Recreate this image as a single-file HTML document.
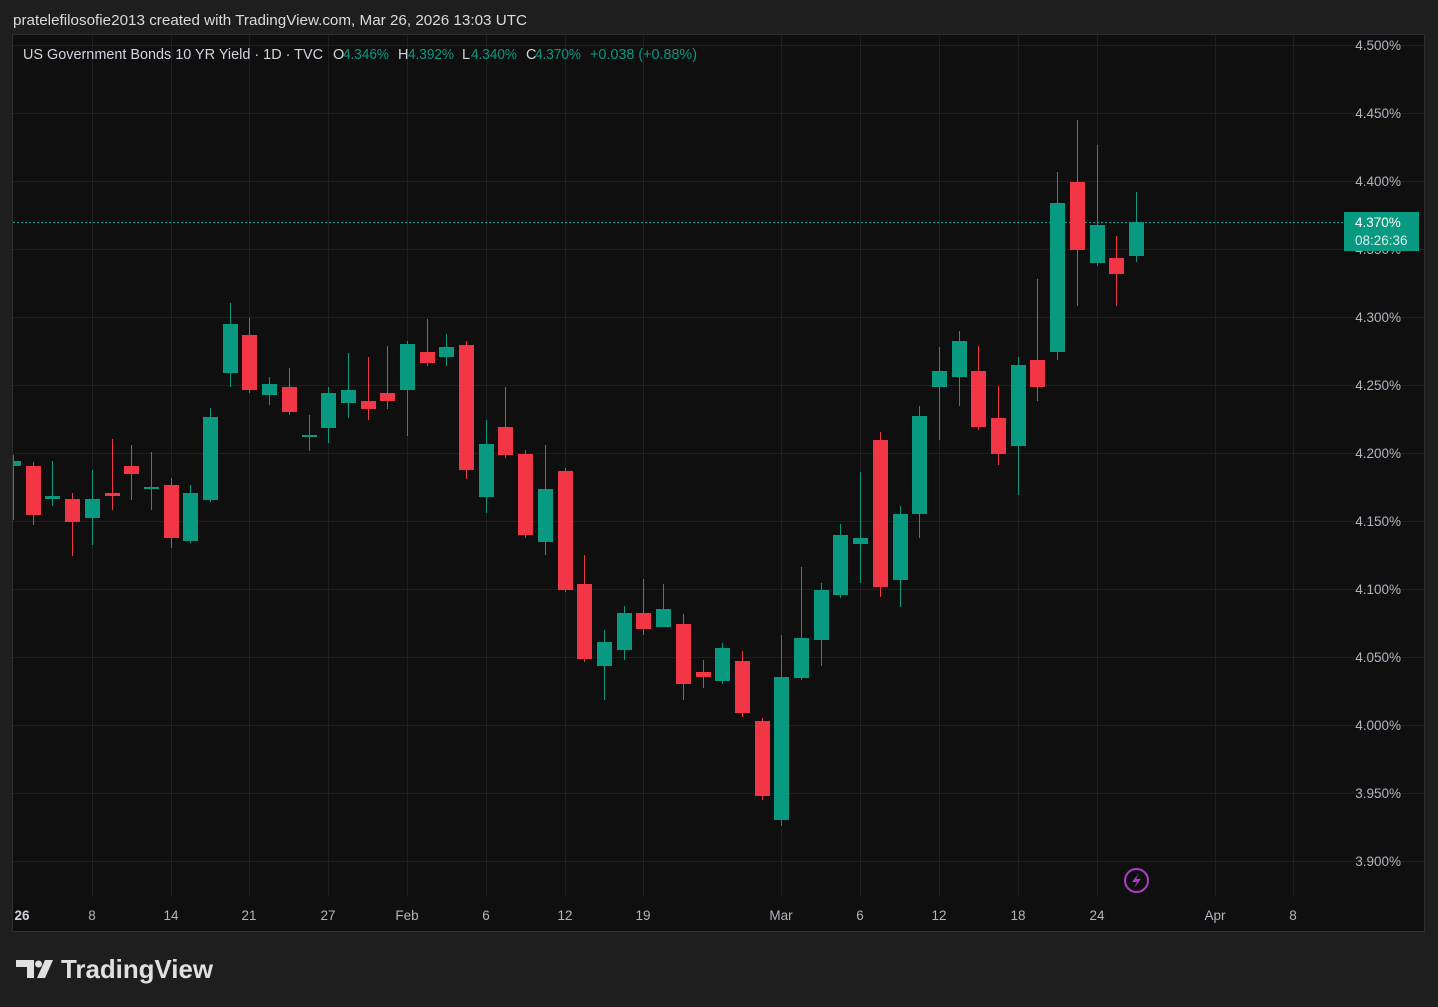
<!DOCTYPE html>
<html><head><meta charset="utf-8"><style>
html,body{margin:0;padding:0;background:#1e1e1e;width:1438px;height:1007px;overflow:hidden}
svg{display:block}
text{font-family:"Liberation Sans",sans-serif}
</style></head><body>
<svg width="1438" height="1007" viewBox="0 0 1438 1007">
<rect width="1438" height="1007" fill="#1e1e1e"/>
<text x="13" y="25" font-size="14.5" fill="#dbdbdb" textLength="514" lengthAdjust="spacingAndGlyphs">pratelefilosofie2013 created with TradingView.com, Mar 26, 2026 13:03 UTC</text>
<rect x="12.5" y="34.5" width="1412" height="897" fill="#0f0f0f" stroke="#2e2e2e"/>
<g stroke="#1f1f1f" stroke-width="1">
<line x1="13" x2="1424" y1="45.5" y2="45.5"/><line x1="13" x2="1424" y1="113.5" y2="113.5"/><line x1="13" x2="1424" y1="181.5" y2="181.5"/><line x1="13" x2="1424" y1="249.5" y2="249.5"/><line x1="13" x2="1424" y1="317.5" y2="317.5"/><line x1="13" x2="1424" y1="385.5" y2="385.5"/><line x1="13" x2="1424" y1="453.5" y2="453.5"/><line x1="13" x2="1424" y1="521.5" y2="521.5"/><line x1="13" x2="1424" y1="589.5" y2="589.5"/><line x1="13" x2="1424" y1="657.5" y2="657.5"/><line x1="13" x2="1424" y1="725.5" y2="725.5"/><line x1="13" x2="1424" y1="793.5" y2="793.5"/><line x1="13" x2="1424" y1="861.5" y2="861.5"/>
<line x1="92.5" x2="92.5" y1="35" y2="896"/><line x1="171.5" x2="171.5" y1="35" y2="896"/><line x1="249.5" x2="249.5" y1="35" y2="896"/><line x1="328.5" x2="328.5" y1="35" y2="896"/><line x1="407.5" x2="407.5" y1="35" y2="896"/><line x1="486.5" x2="486.5" y1="35" y2="896"/><line x1="565.5" x2="565.5" y1="35" y2="896"/><line x1="643.5" x2="643.5" y1="35" y2="896"/><line x1="781.5" x2="781.5" y1="35" y2="896"/><line x1="860.5" x2="860.5" y1="35" y2="896"/><line x1="939.5" x2="939.5" y1="35" y2="896"/><line x1="1018.5" x2="1018.5" y1="35" y2="896"/><line x1="1097.5" x2="1097.5" y1="35" y2="896"/><line x1="1215.5" x2="1215.5" y1="35" y2="896"/><line x1="1293.5" x2="1293.5" y1="35" y2="896"/>
</g>
<line x1="13" x2="1345" y1="222.5" y2="222.5" stroke="#089981" stroke-width="1.2" stroke-dasharray="2 2"/>
<g>
<g fill="#089981">
<rect x="13" y="461" width="8" height="5"/><rect x="13" y="455" width="1" height="65"/>
<rect x="45" y="496" width="15" height="3"/><rect x="52" y="461" width="1" height="45"/>
<rect x="85" y="499" width="15" height="19"/><rect x="92" y="470" width="1" height="75"/>
<rect x="144" y="487" width="15" height="2"/><rect x="151" y="452" width="1" height="58"/>
<rect x="183" y="493" width="15" height="48"/><rect x="190" y="485" width="1" height="58"/>
<rect x="203" y="417" width="15" height="83"/><rect x="210" y="408" width="1" height="94"/>
<rect x="223" y="324" width="15" height="49"/><rect x="230" y="303" width="1" height="84"/>
<rect x="262" y="384" width="15" height="11"/><rect x="269" y="377" width="1" height="28"/>
<rect x="302" y="435" width="15" height="2"/><rect x="309" y="415" width="1" height="36"/>
<rect x="321" y="393" width="15" height="35"/><rect x="328" y="387" width="1" height="56"/>
<rect x="341" y="390" width="15" height="13"/><rect x="348" y="353" width="1" height="65"/>
<rect x="400" y="344" width="15" height="46"/><rect x="407" y="341" width="1" height="95"/>
<rect x="439" y="347" width="15" height="10"/><rect x="446" y="334" width="1" height="32"/>
<rect x="479" y="444" width="15" height="53"/><rect x="486" y="420" width="1" height="93"/>
<rect x="538" y="489" width="15" height="53"/><rect x="545" y="445" width="1" height="110"/>
<rect x="597" y="642" width="15" height="24"/><rect x="604" y="630" width="1" height="70"/>
<rect x="617" y="613" width="15" height="37"/><rect x="624" y="606" width="1" height="54"/>
<rect x="656" y="609" width="15" height="18"/><rect x="663" y="584" width="1" height="43"/>
<rect x="715" y="648" width="15" height="33"/><rect x="722" y="643" width="1" height="41"/>
<rect x="774" y="677" width="15" height="143"/><rect x="781" y="635" width="1" height="191"/>
<rect x="794" y="638" width="15" height="40"/><rect x="801" y="567" width="1" height="113"/>
<rect x="814" y="590" width="15" height="50"/><rect x="821" y="583" width="1" height="83"/>
<rect x="833" y="535" width="15" height="60"/><rect x="840" y="524" width="1" height="74"/>
<rect x="853" y="538" width="15" height="6"/><rect x="860" y="472" width="1" height="111"/>
<rect x="893" y="514" width="15" height="66"/><rect x="900" y="506" width="1" height="101"/>
<rect x="912" y="416" width="15" height="98"/><rect x="919" y="406" width="1" height="132"/>
<rect x="932" y="371" width="15" height="16"/><rect x="939" y="347" width="1" height="93"/>
<rect x="952" y="341" width="15" height="36"/><rect x="959" y="331" width="1" height="75"/>
<rect x="1011" y="365" width="15" height="81"/><rect x="1018" y="357" width="1" height="138"/>
<rect x="1050" y="203" width="15" height="149"/><rect x="1057" y="172" width="1" height="188"/>
<rect x="1090" y="225" width="15" height="38"/><rect x="1097" y="145" width="1" height="121"/>
<rect x="1129" y="222" width="15" height="34"/><rect x="1136" y="192" width="1" height="70"/>
</g>
<g fill="#f23645">
<rect x="26" y="466" width="15" height="49"/><rect x="33" y="462" width="1" height="63"/>
<rect x="65" y="499" width="15" height="23"/><rect x="72" y="493" width="1" height="63"/>
<rect x="105" y="493" width="15" height="3"/><rect x="112" y="439" width="1" height="71"/>
<rect x="124" y="466" width="15" height="8"/><rect x="131" y="445" width="1" height="55"/>
<rect x="164" y="485" width="15" height="53"/><rect x="171" y="478" width="1" height="70"/>
<rect x="242" y="335" width="15" height="55"/><rect x="249" y="318" width="1" height="75"/>
<rect x="282" y="387" width="15" height="25"/><rect x="289" y="368" width="1" height="47"/>
<rect x="361" y="401" width="15" height="8"/><rect x="368" y="357" width="1" height="63"/>
<rect x="380" y="393" width="15" height="8"/><rect x="387" y="346" width="1" height="63"/>
<rect x="420" y="352" width="15" height="11"/><rect x="427" y="319" width="1" height="47"/>
<rect x="459" y="345" width="15" height="125"/><rect x="466" y="341" width="1" height="138"/>
<rect x="498" y="427" width="15" height="28"/><rect x="505" y="387" width="1" height="71"/>
<rect x="518" y="454" width="15" height="81"/><rect x="525" y="450" width="1" height="88"/>
<rect x="558" y="471" width="15" height="119"/><rect x="565" y="468" width="1" height="124"/>
<rect x="577" y="584" width="15" height="75"/><rect x="584" y="555" width="1" height="107"/>
<rect x="636" y="613" width="15" height="16"/><rect x="643" y="579" width="1" height="56"/>
<rect x="676" y="624" width="15" height="60"/><rect x="683" y="614" width="1" height="86"/>
<rect x="696" y="672" width="15" height="5"/><rect x="703" y="660" width="1" height="28"/>
<rect x="735" y="661" width="15" height="52"/><rect x="742" y="651" width="1" height="66"/>
<rect x="755" y="721" width="15" height="75"/><rect x="762" y="718" width="1" height="82"/>
<rect x="873" y="440" width="15" height="147"/><rect x="880" y="432" width="1" height="165"/>
<rect x="971" y="371" width="15" height="56"/><rect x="978" y="346" width="1" height="84"/>
<rect x="991" y="418" width="15" height="36"/><rect x="998" y="386" width="1" height="79"/>
<rect x="1030" y="360" width="15" height="27"/><rect x="1037" y="279" width="1" height="122"/>
<rect x="1070" y="182" width="15" height="68"/><rect x="1077" y="120" width="1" height="186"/>
<rect x="1109" y="258" width="15" height="16"/><rect x="1116" y="236" width="1" height="70"/>
</g>
</g>
<g font-size="13.5" fill="#b2b5be" text-anchor="end">
<text x="1401" y="50">4.500%</text><text x="1401" y="118">4.450%</text><text x="1401" y="186">4.400%</text><text x="1401" y="254">4.350%</text><text x="1401" y="322">4.300%</text><text x="1401" y="390">4.250%</text><text x="1401" y="458">4.200%</text><text x="1401" y="526">4.150%</text><text x="1401" y="594">4.100%</text><text x="1401" y="662">4.050%</text><text x="1401" y="730">4.000%</text><text x="1401" y="798">3.950%</text><text x="1401" y="866">3.900%</text>
</g>
<rect x="1344" y="212" width="75" height="39" fill="#089981"/>
<text x="1355" y="227" font-size="13.5" fill="#ffffff">4.370%</text>
<text x="1355" y="245" font-size="13.5" fill="#d8efe9">08:26:36</text>
<g font-size="13.5" fill="#b2b5be" text-anchor="middle">
<text x="22" y="920" font-weight="bold" fill="#d1d4dc">26</text><text x="92" y="920">8</text><text x="171" y="920">14</text><text x="249" y="920">21</text><text x="328" y="920">27</text><text x="407" y="920">Feb</text><text x="486" y="920">6</text><text x="565" y="920">12</text><text x="643" y="920">19</text><text x="781" y="920">Mar</text><text x="860" y="920">6</text><text x="939" y="920">12</text><text x="1018" y="920">18</text><text x="1097" y="920">24</text><text x="1215" y="920">Apr</text><text x="1293" y="920">8</text>
</g>
<circle cx="1136.5" cy="880.5" r="11.5" fill="none" stroke="#b03ac9" stroke-width="2"/>
<path d="M1139 873 L1132 882 L1137 882 L1134 888 L1141 879 L1136 879 Z" fill="#b03ac9"/>
<g font-size="14.5" fill="#d1d4dc">
<text x="23" y="59" textLength="300" lengthAdjust="spacingAndGlyphs">US Government Bonds 10 YR Yield · 1D · TVC</text>
<text x="333" y="59">O</text><text x="343" y="59" fill="#089981" textLength="46" lengthAdjust="spacingAndGlyphs">4.346%</text>
<text x="398" y="59">H</text><text x="408" y="59" fill="#089981" textLength="46" lengthAdjust="spacingAndGlyphs">4.392%</text>
<text x="462" y="59">L</text><text x="471" y="59" fill="#089981" textLength="46" lengthAdjust="spacingAndGlyphs">4.340%</text>
<text x="526" y="59">C</text><text x="535" y="59" fill="#089981" textLength="46" lengthAdjust="spacingAndGlyphs">4.370%</text>
<text x="590" y="59" fill="#089981" textLength="107" lengthAdjust="spacingAndGlyphs">+0.038 (+0.88%)</text>
</g>
<g fill="#e0e0e0">
<path d="M16 960 H34 V978 H27 V967 H16 Z"/>
<circle cx="38.5" cy="964" r="3.5"/>
<path d="M45 960 H53 L45 978 H37 Z"/>
</g>
<text x="61" y="978" font-size="26" font-weight="bold" fill="#e0e0e0" textLength="152" lengthAdjust="spacingAndGlyphs">TradingView</text>
</svg>
</body></html>
